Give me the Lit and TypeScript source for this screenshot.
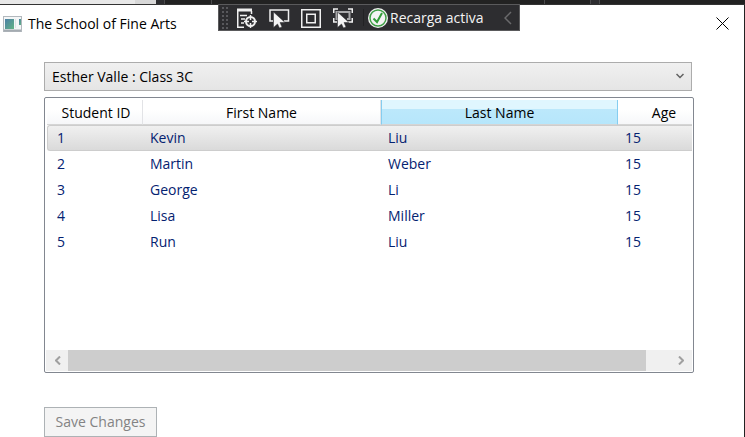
import { LitElement, html, css, svg } from "lit";
import { customElement, state } from "lit/decorators.js";
import { classMap } from "lit/directives/class-map.js";

interface Student {
  id: number;
  first: string;
  last: string;
  age: number;
}

const STUDENTS: Student[] = [
  { id: 1, first: "Kevin", last: "Liu", age: 15 },
  { id: 2, first: "Martin", last: "Weber", age: 15 },
  { id: 3, first: "George", last: "Li", age: 15 },
  { id: 4, first: "Lisa", last: "Miller", age: 15 },
  { id: 5, first: "Run", last: "Liu", age: 15 },
];

const cursor = svg`<path d="M5.500 5v15.500l4-3.500 2 4 2.500-1-2-4.500h5z" fill="#f4f4f4" stroke="#2d2d30" stroke-width=".5"/>`;

@customElement("debug-toolbar")
export class DebugToolbar extends LitElement {
  static styles = css`
    :host {
      display: flex;
      align-items: center;
      box-sizing: border-box;
      height: 27px;
      width: 302px;
      background: #2d2d30;
      border: 1px solid #5a5a5c;
      color: #f4f4f4;
    }
    .grip {
      width: 8px;
      height: 24px;
      margin: 0 8px 0 2px;
      background:
        radial-gradient(circle, #58585c 1px, transparent 1px) 0 0 / 4px 4px;
    }
    button {
      display: flex;
      align-items: center;
      padding: 0;
      border: 0;
      background: none;
      color: inherit;
      font: inherit;
    }
    .tool {
      width: 32px;
    }
    svg {
      display: block;
      flex: none;
    }
    .divider {
      width: 1px;
      height: 17px;
      margin: 0 4px 0 -2px;
      background: #222224;
    }
    .reload {
      flex: 1;
      gap: 2px;
      white-space: nowrap;
    }
    .collapse {
      padding-right: 7px;
    }
  `;

  render() {
    return html`
      <span class="grip"></span>
      <button class="tool" aria-label="Go to live visual tree">
        <svg width="22" height="22" viewBox="1 0 22 22" fill="none" stroke="#f0f0f0">
          <path d="M1 3h15" stroke-width="3" />
          <path d="M1.750 4v16.250H8M4 8.500h7M5 12h4M5 16h3M15.500 4v3" stroke-width="1.500" />
          <circle cx="14.500" cy="14.500" r="4.500" stroke-width="2" />
          <path d="M14.500 8v5M14.500 16v5M8 14.500h5M16 14.500h5" stroke-width="1.500" />
        </svg>
      </button>
      <button class="tool" aria-label="Select element">
        <svg width="22" height="22" viewBox="1 0 22 22">
          <path d="M5 14H2V3h18.500v11H16" fill="none" stroke="#f0f0f0" stroke-width="1.500" />
          ${cursor}
        </svg>
      </button>
      <button class="tool" aria-label="Display layout adorners">
        <svg width="22" height="22" viewBox="1 0 22 22" fill="none" stroke="#f0f0f0">
          <rect x="1.750" y="2.750" width="18.500" height="17.500" stroke-width="1.500" />
          <rect x="6.750" y="7.250" width="8.500" height="8.500" stroke-width="1.500" />
        </svg>
      </button>
      <button class="tool" aria-label="Track focused element">
        <svg width="22" height="22" viewBox="1 0 22 22">
          <path
            d="M1.750 6V2H6M16 2h4.250v4M1.750 11v4H5M16 15h4.250v-4"
            fill="none" stroke="#f0f0f0" stroke-width="1.500"
          />
          <path d="M7 12H4.500V5h13v7H15" fill="none" stroke="#a8a8aa" stroke-width="2" />
          ${cursor}
        </svg>
      </button>
      <span class="divider"></span>
      <button class="reload">
        <svg width="20" height="20" viewBox="0 0 20 20">
          <circle cx="10" cy="10" r="10" fill="#f4f4f4" />
          <circle cx="10" cy="10" r="8" fill="none" stroke="#3f9f46" stroke-width="1.500" />
          <path d="M5.500 10.500l3.500 3.500 5-9" fill="none" stroke="#329c3a" stroke-width="2" />
        </svg>
        Recarga activa
      </button>
      <button class="collapse" aria-label="Collapse toolbar">
        <svg width="8" height="14" viewBox="0 0 8 14" fill="none" stroke="#6a6a6c">
          <path d="M7 1L1 7l6 6" stroke-width="1.500" />
        </svg>
      </button>
    `;
  }
}

@customElement("student-list")
export class StudentList extends LitElement {
  @state() private selected = 1;

  static styles = css`
    :host {
      display: flex;
      flex-direction: column;
      box-sizing: border-box;
      height: 276px;
      padding: 1px;
      border: 1px solid #828790;
      border-radius: 2px;
      background: #fff;
    }
    .view {
      flex: 1;
      overflow: hidden;
      padding: 1px 0 0 1px;
    }
    table {
      table-layout: fixed;
      width: 664px;
      border-collapse: separate;
      border-spacing: 0;
    }
    .c-id { width: 96px; }
    .c-first { width: 238px; }
    .c-last { width: 237px; }
    .c-age { width: 93px; }
    th {
      box-sizing: border-box;
      height: 25px;
      padding: 1px 0 0;
      font-weight: 400;
      line-height: 20px;
      text-align: center;
      border-right: 1px solid #e2e3e6;
      border-bottom: 1px solid #d5d5d5;
      background: linear-gradient(#fff 40%, #f6f7f9);
    }
    th:first-child {
      padding-left: 3px;
    }
    th.hover {
      border-left: 1px solid #85cdf0;
      border-right-color: #85cdf0;
      background: linear-gradient(#e0f6fe 38%, #bce8fb 38%, #b6e6fb);
    }
    td {
      box-sizing: border-box;
      height: 26px;
      padding: 0 0 0 7px;
      line-height: 20px;
      color: #042271;
      border: 1px solid transparent;
      border-width: 1px 0;
    }
    td:first-child {
      padding-left: 9px;
      border-left-width: 1px;
    }
    .selected td {
      background: linear-gradient(#f0f0f0, #dadada);
      border-color: #cdcdcd;
    }
    .selected td:first-child {
      border-radius: 3px 0 0 3px;
    }
    .scroll {
      display: flex;
      height: 21px;
      padding: 0 1px;
      background: #f0f0f0;
    }
    .thumb {
      flex: 580;
      background: #cdcdcd;
    }
    .track {
      flex: 24;
    }
    .arrow {
      display: flex;
      align-items: center;
      justify-content: center;
      width: 21px;
      padding: 0;
      border: 0;
      background: #f0f0f0;
    }
  `;

  render() {
    return html`
      <div class="view">
        <table>
          <colgroup>
            <col class="c-id" /><col class="c-first" /><col class="c-last" /><col class="c-age" />
          </colgroup>
          <thead>
            <tr>
              <th>Student ID</th>
              <th>First Name</th>
              <th class="hover">Last Name</th>
              <th>Age</th>
            </tr>
          </thead>
          <tbody>
            ${STUDENTS.map(
              (s) => html`
                <tr
                  class=${classMap({ selected: s.id === this.selected })}
                  @click=${() => (this.selected = s.id)}
                >
                  <td>${s.id}</td>
                  <td>${s.first}</td>
                  <td>${s.last}</td>
                  <td>${s.age}</td>
                </tr>
              `,
            )}
          </tbody>
        </table>
      </div>
      <div class="scroll">
        <button class="arrow" aria-label="Scroll left">
          <svg width="6" height="9" viewBox="0 0 6 9" fill="none" stroke="#a0a0a0" stroke-width="2">
            <path d="M5 .5l-4 4 4 4" />
          </svg>
        </button>
        <span class="thumb"></span>
        <span class="track"></span>
        <button class="arrow" aria-label="Scroll right">
          <svg width="6" height="9" viewBox="0 0 6 9" fill="none" stroke="#a0a0a0" stroke-width="2">
            <path d="M1 .5l4 4-4 4" />
          </svg>
        </button>
      </div>
    `;
  }
}

@customElement("app-root")
export class AppRoot extends LitElement {
  static styles = css`
    :host {
      display: block;
      position: relative;
      min-height: 100vh;
      box-sizing: border-box;
      border-right: 1px solid #222;
      background: #fff;
      font: 14px/20px "Open Sans", "Noto Sans", sans-serif;
      color: #000;
    }
    .backdrop {
      display: flex;
      box-sizing: border-box;
      height: 5px;
      margin-right: -1px;
      background: #222;
      border-bottom: 1px solid #333;
    }
    .light {
      width: 135px;
      background: #e8e8e8;
    }
    .shade {
      width: 21px;
      background: #d8d8d8;
    }
    .pane {
      box-sizing: border-box;
      border-right: 1px solid #4a4a4c;
    }
    .pane.narrow {
      width: 9px;
      background: #2d2d30;
    }
    .pane.left {
      width: 47px;
    }
    .pane.middle {
      width: 333px;
    }
    .pane.right {
      width: 46px;
    }
    .titlebar {
      display: flex;
      align-items: center;
      gap: 6px;
      height: 37px;
      padding: 0 15px 0 3px;
    }
    h1 {
      flex: 1;
      margin: 0;
      font: inherit;
    }
    .close {
      display: flex;
      padding: 0;
      border: 0;
      background: none;
    }
    debug-toolbar {
      position: absolute;
      top: 4px;
      left: 218px;
    }
    main {
      display: flex;
      flex-direction: column;
      padding: 20px 50px 0 44px;
    }
    .combo {
      display: grid;
      margin: 0 2px 6px 0;
    }
    .combo > * {
      grid-area: 1 / 1;
    }
    select {
      appearance: none;
      height: 29px;
      width: 100%;
      padding: 0 7px;
      border: 1px solid #acacac;
      border-radius: 0;
      background: linear-gradient(#f0f0f0, #e5e5e5);
      color: inherit;
      font: inherit;
    }
    .chevron {
      place-self: center end;
      margin: 0 8px 2px 0;
      pointer-events: none;
    }
    .save {
      align-self: flex-start;
      height: 30px;
      margin-top: 34px;
      width: 113px;
      padding: 0;
      border: 1px solid #adb2b5;
      background: #f4f4f4;
      color: #838383;
      font: inherit;
    }
  `;

  render() {
    return html`
      <div class="backdrop">
        <span class="light"></span><span class="shade"></span>
        <span class="pane narrow"></span><span class="pane left"></span>
        <span class="pane middle"></span><span class="pane right"></span>
        <span class="pane narrow"></span>
      </div>
      <header class="titlebar">
        <svg width="19" height="16" viewBox="0 0 19 16">
          <defs>
            <linearGradient id="pane" x1="0" y1="0" x2="1" y2="1">
              <stop offset="0" stop-color="#4c7fa6" />
              <stop offset="1" stop-color="#62b384" />
            </linearGradient>
          </defs>
          <rect x=".5" y=".5" width="18" height="15" fill="#f4f6f7" stroke="#b2b8bd" />
          <path d="M1 14.500h17" stroke="#a4abb1" stroke-width="2" />
          <rect x="2" y="3" width="9" height="10" fill="url(#pane)" />
          <path d="M12.500 3v9" stroke="#dde2e5" />
          <rect x="16" y="3" width="2" height="6" fill="url(#pane)" />
        </svg>
        <h1>The School of Fine Arts</h1>
        <button class="close" aria-label="Close">
          <svg width="13" height="13" viewBox="0 0 13 13" stroke="#000" stroke-width="1">
            <path d="M.5 .5l12 12M12.500 .5l-12 12" />
          </svg>
        </button>
      </header>
      <debug-toolbar></debug-toolbar>
      <main>
        <div class="combo">
          <select aria-label="Class">
            <option>Esther Valle : Class 3C</option>
          </select>
          <svg class="chevron" width="8" height="6" viewBox="0 0 8 6" fill="none" stroke="#606060" stroke-width="1.500">
            <path d="M.5 1L4 4.500 7.500 1" />
          </svg>
        </div>
        <student-list></student-list>
        <button class="save" disabled>Save Changes</button>
      </main>
    `;
  }
}
